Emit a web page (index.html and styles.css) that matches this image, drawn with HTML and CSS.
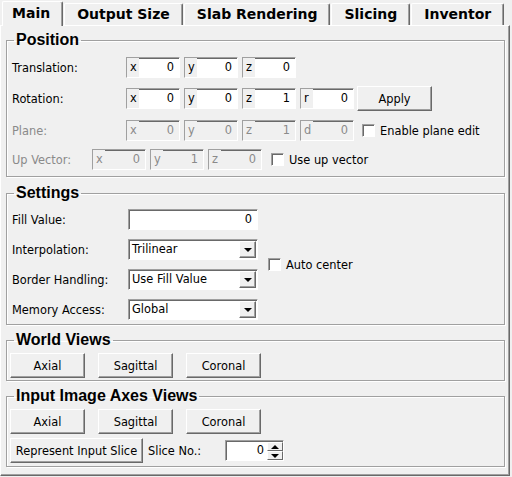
FILE: index.html
```html
<!DOCTYPE html>
<html lang="en">
<head>
    <meta charset="UTF-8">
    <title>Reformat Settings</title>
    <link rel="stylesheet" href="styles.css">
</head>
<body>
    <div class="tabs">
        <div class="tab active">Main</div>
        <div class="tab">Output Size</div>
        <div class="tab">Slab Rendering</div>
        <div class="tab">Slicing</div>
        <div class="tab">Inventor</div>
    </div>

    <div class="pane">
        <fieldset class="group group-position">
            <legend>Position</legend>
            <div class="row">
                <span class="label">Translation:</span>
                <span class="vec"><span class="axis">x</span><span class="num">0</span></span>
                <span class="vec"><span class="axis">y</span><span class="num">0</span></span>
                <span class="vec"><span class="axis">z</span><span class="num">0</span></span>
            </div>
            <div class="row row-tall">
                <span class="label">Rotation:</span>
                <span class="vec"><span class="axis">x</span><span class="num">0</span></span>
                <span class="vec"><span class="axis">y</span><span class="num">0</span></span>
                <span class="vec"><span class="axis">z</span><span class="num">1</span></span>
                <span class="vec"><span class="axis">r</span><span class="num">0</span></span>
                <button class="btn btn-apply">Apply</button>
            </div>
            <div class="row disabled">
                <span class="label">Plane:</span>
                <span class="vec"><span class="axis">x</span><span class="num">0</span></span>
                <span class="vec"><span class="axis">y</span><span class="num">0</span></span>
                <span class="vec"><span class="axis">z</span><span class="num">1</span></span>
                <span class="vec"><span class="axis">d</span><span class="num">0</span></span>
                <label class="check check-plane"><span class="box"></span>Enable plane edit</label>
            </div>
            <div class="row disabled">
                <span class="label label-short">Up Vector:</span>
                <span class="vec"><span class="axis">x</span><span class="num">0</span></span>
                <span class="vec"><span class="axis">y</span><span class="num">1</span></span>
                <span class="vec"><span class="axis">z</span><span class="num">0</span></span>
                <label class="check check-up"><span class="box"></span>Use up vector</label>
            </div>
        </fieldset>

        <fieldset class="group group-settings">
            <legend>Settings</legend>
            <div class="settings-grid">
                <span class="label">Fill Value:</span>
                <span class="field">0</span>
                <span class="label">Interpolation:</span>
                <span class="combo"><span class="combo-text">Trilinear</span><span class="combo-arrow"></span></span>
                <label class="check check-auto"><span class="box"></span>Auto center</label>
                <span class="label">Border Handling:</span>
                <span class="combo"><span class="combo-text">Use Fill Value</span><span class="combo-arrow"></span></span>
                <span class="label">Memory Access:</span>
                <span class="combo"><span class="combo-text">Global</span><span class="combo-arrow"></span></span>
            </div>
        </fieldset>

        <fieldset class="group group-buttons">
            <legend>World Views</legend>
            <div class="btn-row">
                <button class="btn btn-view">Axial</button>
                <button class="btn btn-view">Sagittal</button>
                <button class="btn btn-view">Coronal</button>
            </div>
        </fieldset>

        <fieldset class="group group-buttons group-input">
            <legend>Input Image Axes Views</legend>
            <div class="btn-row">
                <button class="btn btn-view">Axial</button>
                <button class="btn btn-view">Sagittal</button>
                <button class="btn btn-view">Coronal</button>
            </div>
            <div class="btn-row slice-row">
                <button class="btn btn-represent">Represent Input Slice</button>
                <span class="slice-label">Slice No.:</span>
                <span class="spin">
                    <span class="spin-value">0</span>
                    <span class="spin-buttons">
                        <span class="spin-btn"><span class="tri-up"></span></span>
                        <span class="spin-btn"><span class="tri-down"></span></span>
                    </span>
                </span>
            </div>
        </fieldset>
    </div>
</body>
</html>
```

FILE: styles.css
```css
body {
    margin: 0;
    width: 512px;
    height: 477px;
    background-color: #f0f0f0;
    font-family: "DejaVu Sans", sans-serif;
    font-size: 11.4px;
    color: #000;
    overflow: hidden;
}
.tabs {
    display: flex;
    align-items: flex-end;
    gap: 1px;
    height: 25px;
    padding-left: 2px;
}
.tab {
    height: 22px;
    box-sizing: border-box;
    padding: 0 12px;
    border-top: 1px solid #fff;
    border-left: 1px solid #fff;
    border-right: 1px solid #696969;
    border-radius: 2px 2px 0 0;
    box-shadow: inset -1px 0 0 #a0a0a0;
    font-weight: bold;
    font-size: 14px;
    line-height: 20px;
}
.tab.active {
    position: relative;
    z-index: 1;
    height: 25px;
    margin-bottom: -1px;
    padding: 0 12px 0 9px;
    line-height: 22px;
    background-color: #f0f0f0;
}
.pane {
    width: 510px;
    height: 451px;
    box-sizing: border-box;
    padding: 0 4px 0 5px;
    border-top: 1px solid #fff;
    border-left: 1px solid #fff;
    border-right: 1px solid #696969;
    border-bottom: 1px solid #696969;
    box-shadow: inset -1px -1px 0 #a0a0a0;
}
.group {
    margin: 0;
    min-width: 0;
    padding: 8px 4px 5px 5px;
    border: 1px solid #a0a0a0;
    box-shadow: 1px 1px 0 #fff, inset 1px 1px 0 #fff;
}
.group legend {
    margin-left: 2px;
    padding: 0 2px;
    font-family: "Liberation Sans", Arial, sans-serif;
    font-weight: bold;
    font-size: 16px;
    line-height: 16px;
}
.group-position {
    margin-top: 6px;
    padding-top: 9px;
    padding-bottom: 6px;
}
.group-settings {
    margin-top: 8px;
    padding-bottom: 4px;
}
.group-buttons {
    margin-top: 7px;
    padding-top: 5px;
    padding-bottom: 2px;
}
.group-input {
    padding-bottom: 3px;
}
.row {
    display: flex;
    align-items: center;
    gap: 4px;
    height: 21px;
    margin-bottom: 8px;
}
.row:last-child {
    margin-bottom: 0;
}
.row-tall {
    height: 25px;
    margin-bottom: 9px;
}
.label {
    width: 110px;
    flex-shrink: 0;
}
.row .label-short {
    width: 76px;
}
.disabled {
    color: #8a8a8a;
}
.vec {
    display: flex;
    width: 54px;
    height: 21px;
    box-sizing: border-box;
    border: 1px solid;
    border-color: #a0a0a0 #fff #fff #a0a0a0;
    box-shadow: inset 1px 1px 0 #696969;
    background-color: #fff;
    line-height: 19px;
}
.vec .axis {
    width: 9px;
    padding-left: 3px;
    background-color: #f0f0f0;
}
.vec .num {
    flex: 1;
    text-align: right;
    padding-right: 5px;
}
.disabled .vec {
    background-color: #f0f0f0;
}
.btn {
    box-sizing: border-box;
    height: 25px;
    padding: 0;
    font-family: "DejaVu Sans", sans-serif;
    font-size: 11.4px;
    color: #000;
    background-color: #f0f0f0;
    border: 1px solid;
    border-color: #fff #696969 #696969 #fff;
    box-shadow: inset -1px -1px 0 #a0a0a0;
}
.btn-apply {
    width: 75px;
    margin-left: -1px;
}
.check {
    display: flex;
    align-items: center;
    gap: 5px;
}
.check .box {
    width: 13px;
    height: 13px;
    box-sizing: border-box;
    border: 1px solid;
    border-color: #a0a0a0 #fff #fff #a0a0a0;
    box-shadow: inset 1px 1px 0 #696969;
    background-color: #fff;
}
.disabled .check {
    color: #000;
}
.check-plane {
    margin-left: 4px;
}
.check-up {
    margin-left: 5px;
}
.settings-grid {
    display: grid;
    grid-template-columns: 116px 130px auto;
    grid-auto-rows: 21px;
    row-gap: 9px;
    align-items: center;
}
.settings-grid .label {
    grid-column: 1;
}
.check-auto {
    grid-column: 3;
    grid-row: 2 / 4;
    align-self: center;
    margin-left: 10px;
}
.field,
.combo {
    display: flex;
    height: 21px;
    box-sizing: border-box;
    border: 1px solid;
    border-color: #a0a0a0 #fff #fff #a0a0a0;
    box-shadow: inset 1px 1px 0 #696969;
    background-color: #fff;
    line-height: 19px;
}
.field {
    justify-content: flex-end;
    padding-right: 5px;
}
.combo-text {
    flex: 1;
    padding-left: 3px;
}
.combo-arrow {
    width: 17px;
    height: 17px;
    margin: 1px 1px 0 0;
    box-sizing: border-box;
    border: 1px solid;
    border-color: #fff #696969 #696969 #fff;
    box-shadow: inset -1px -1px 0 #a0a0a0;
    background-color: #f0f0f0;
    display: flex;
    align-items: center;
    justify-content: center;
}
.combo-arrow::after {
    content: "";
    border-left: 4px solid transparent;
    border-right: 4px solid transparent;
    border-top: 4px solid #000;
    margin-top: 1px;
}
.btn-row {
    display: flex;
    align-items: center;
    gap: 13px;
    margin-left: -2px;
}
.btn-view {
    width: 75px;
}
.slice-row {
    gap: 0;
    margin-top: 4px;
}
.btn-represent {
    width: 133px;
}
.slice-label {
    width: 77px;
    margin-left: 5px;
}
.spin {
    display: flex;
    width: 59px;
    height: 21px;
    box-sizing: border-box;
    border: 1px solid;
    border-color: #a0a0a0 #fff #fff #a0a0a0;
    box-shadow: inset 1px 1px 0 #696969;
    background-color: #fff;
    line-height: 19px;
}
.spin-value {
    flex: 1;
    text-align: right;
    padding-right: 3px;
}
.spin-buttons {
    display: flex;
    flex-direction: column;
    width: 16px;
    margin: 1px 0 0;
}
.spin-btn {
    flex: 1;
    box-sizing: border-box;
    border: 1px solid;
    border-color: #fff #696969 #696969 #fff;
    background-color: #f0f0f0;
    display: flex;
    align-items: center;
    justify-content: center;
}
.tri-up {
    border-left: 4px solid transparent;
    border-right: 4px solid transparent;
    border-bottom: 4px solid #000;
}
.tri-down {
    border-left: 4px solid transparent;
    border-right: 4px solid transparent;
    border-top: 4px solid #000;
}
```
